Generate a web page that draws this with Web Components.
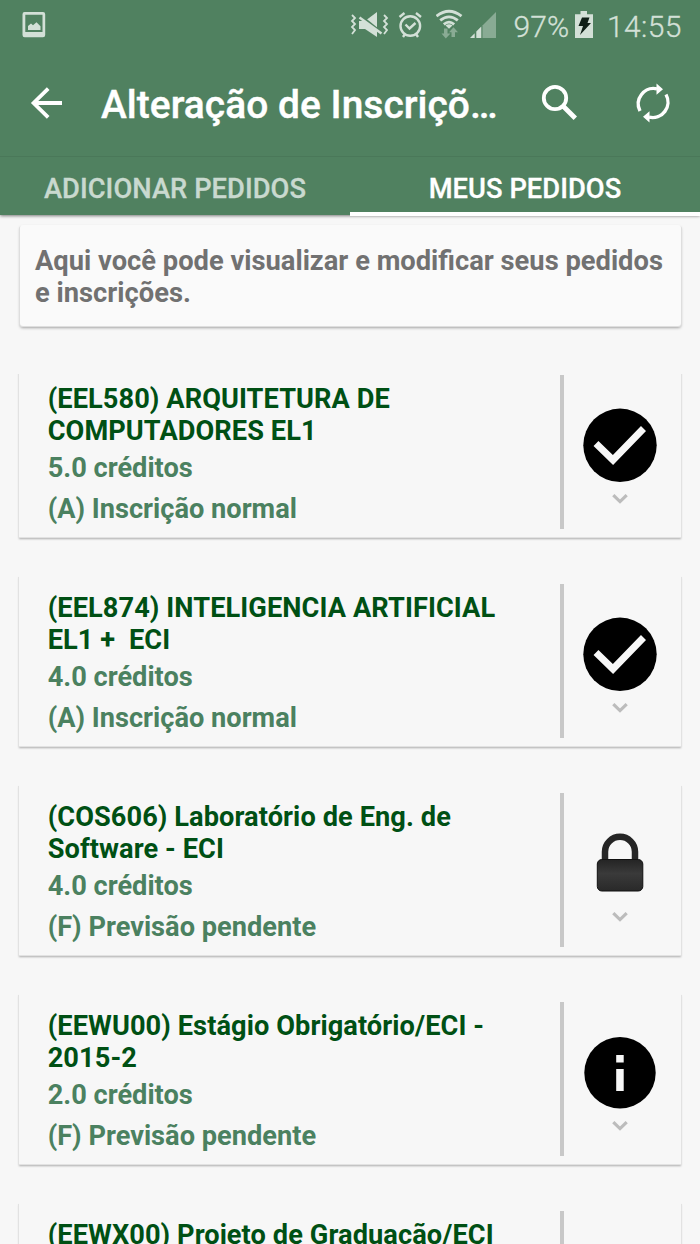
<!DOCTYPE html>
<html lang="pt-BR">
<head>
<meta charset="utf-8">
<title>Alteração de Inscrições</title>
<style>
html,body{margin:0;height:100%;overflow:hidden;background:#f7f7f7}
body{font-family:Roboto,"Liberation Sans",sans-serif}
</style>
</head>
<body>
<inscricoes-app></inscricoes-app>
<script>
const define = (name, html, init) => customElements.define(name, class extends HTMLElement {
  constructor(){
    super();
    const t = document.createElement('template');
    t.innerHTML = html;
    this.attachShadow({mode:'open'}).appendChild(t.content.cloneNode(true));
  }
  connectedCallback(){ if (init) init(this, this.shadowRoot); }
});

define('status-bar', `
<style>
:host{display:flex;align-items:center;height:50px;color:#d3e0d7;font-weight:300;font-size:30px;line-height:35px;white-space:pre}
svg{display:block;flex:none;fill:currentColor}
.photo{margin-left:22px;margin-right:303px}
.pct{width:60.500px;margin-left:2.500px;padding-top:2px;letter-spacing:.1px;-webkit-text-stroke:.3px currentColor}
.time{margin-left:13px;padding-top:2px;letter-spacing:.4px;-webkit-text-stroke:.3px currentColor}
</style>
<svg class="photo" width="24" height="50" viewBox="0 0 24 50"><path fill-rule="evenodd" d="M2.500 12H21q2.200 0 2.200 2.200V35q0 2.200-2.200 2.200H2.700Q.5 37.200.5 35V14.200Q.5 12 2.500 12ZM3.300 14.700V32H20.500V14.700Z"/><path d="M6 30V26l3-2.500 2 1.800 3.500-3 4 4V30Z"/></svg>
<svg width="41" height="50" viewBox="349 0 41 50"><path d="M359 21h6l12-9v25l-12-8h-6z"/><path d="M361 16l21 17" stroke="#508160" stroke-width="2.500"/><path d="M359.500 17.500l22 16" stroke="currentColor" stroke-width="2.500"/><path d="M352 15l3 3-3 3 3 3-3 3 3 3-3 4M384 15l3 3-3 3 3 3-3 3 3 3-3 4" fill="none" stroke="currentColor" stroke-width="1.800"/></svg>
<svg width="46" height="50" viewBox="390 0 46 50"><g fill="none" stroke="currentColor" stroke-width="2.400"><circle cx="410.300" cy="26" r="9.800"/><path d="M405.500 24.500l4 4 6-5.500M399.500 17l5-4M421 17l-5-4M405 34l-2 3M416 34l2 3"/></g></svg>
<svg width="32" height="50" viewBox="436 0 32 50"><g fill="none" stroke="currentColor" stroke-width="2.800"><path d="M436.500 16.200Q449 6.200 461.500 16.200M440.200 20.400Q449 13.300 457.800 20.400M443.800 24.300Q449 20 454.200 24.300"/></g><path d="M445.500 25.500Q449 23 452.500 25.500L449 28.700Z"/><g fill="#89ab94"><path d="M444 28.500h3.500v5h3l-4.700 5-4.300-5h2.500zM451.500 37v-4.800h-2.500l4.500-5 4.500 5h-3V37z"/></g></svg>
<svg width="43" height="50" viewBox="468 0 43 50"><path fill="#89ab94" d="M482.500 25.500L496 12v26h-13.500z"/><path d="M470 38l4.700-4.800V38zM476.300 31.600l5-5V38h-5z"/></svg>
<span class="pct">97%</span>
<svg width="20" height="50" viewBox="575 0 20 50"><path d="M576 14.200h5.500V11h6.500v3.200h6V38h-18z"/><path fill="#102018" d="M583 17.500h7.500l-2 5.500h3.500l-11 12 3-9h-4.500z"/></svg>
<span class="time">14:55</span>`);

define('app-toolbar', `
<style>
:host{display:flex;align-items:center;height:106px;color:#fff;border-bottom:1px solid #4a7859}
h1{margin:3px 0 0 37px;width:402px;font-size:38.900px;line-height:46px;font-weight:500;white-space:nowrap;letter-spacing:.05px;-webkit-text-stroke:.4px currentColor}
svg{display:block;flex:none}
.back{margin-left:30px}.find{margin-left:37px}.sync{margin-left:54px}
</style>
<svg class="back" width="34" height="106" viewBox="30 50 34 106"><path d="M62 103H34M48.200 88.700L33.600 103l14.600 14.300" fill="none" stroke="#fff" stroke-width="3.800"/></svg>
<h1><slot></slot></h1>
<svg class="find" width="38" height="106" viewBox="540 50 38 106"><circle cx="555" cy="98" r="11.200" fill="none" stroke="#fff" stroke-width="3.800"/><path d="M563 106l12.300 12.300" stroke="#fff" stroke-width="4.800"/></svg>
<svg class="sync" width="40" height="106" viewBox="632 50 40 106"><g fill="none" stroke="#fff" stroke-width="3.400"><path d="M640 111A15.500 15.500 0 0 1 657 88.800M666 94.500A15.500 15.500 0 0 1 649 117.200"/></g><path fill="#fff" d="M656.500 83.500l6.500 5.800-6.500 5.500zM649.500 111.200l-6.500 5.600 6.500 5.700z"/></svg>`);

define('tab-item', `
<style>
:host{flex:1;box-sizing:border-box;height:59px;padding-top:15.500px;border-bottom:4px solid transparent;text-align:center;font-size:27.300px;line-height:32px;font-weight:500;letter-spacing:.05px;color:#c9d9cf;white-space:nowrap;-webkit-text-stroke:.3px currentColor}
:host([active]){color:#fff;border-bottom-color:#fff}
</style><slot></slot>`);

define('app-header', `
<style>
:host{display:block;position:relative;z-index:1;height:215px;background:#508160;box-shadow:0 1px 3px rgba(0,0,0,.5)}
nav{display:flex}
</style>
<slot></slot><nav><slot name="tab"></slot></nav>`);

define('info-card', `
<style>
:host{display:block;box-sizing:border-box;margin:10px 19.500px 0;height:101px;padding:20px 0 0 15.500px;background:#fafafa;border-radius:3px;box-shadow:-1px 1px 0 #dedede,1px 1px 0 #dedede,0 2px 3px rgba(0,0,0,.34);color:#717171;font-size:27.300px;line-height:32px;font-weight:700}
</style><slot></slot>`);

const icons = {
  check:`<circle cx="37" cy="37.300" r="36.700"/><path d="M13 35.500L30 52 60.500 20.500" fill="none" stroke="#f7f7f7" stroke-width="7"/>`,
  lock:`<defs><linearGradient id="g" x1="0" x2="0" y1="0" y2="1"><stop stop-color="#242424"/><stop offset=".45" stop-color="#3a3a3a"/><stop offset="1" stop-color="#292929"/></linearGradient></defs><path d="M22 36V25.800a15 15 0 0 1 30 0V36" fill="none" stroke="#252525" stroke-width="6.500"/><rect x="14.300" y="33.500" width="45.500" height="31.500" rx="4.500" fill="url(#g)" stroke="#111"/>`,
  info:`<circle cx="37" cy="37.800" r="35.700"/><path fill="#f7f7f7" d="M33.200 20h7.500v7.500h-7.500zM33.200 34h7.500v22h-7.500z"/>`
};

define('pedido-card', `
<style>
:host{display:flex;box-sizing:border-box;margin:0 19px 39px;height:170px;padding-top:8px;box-shadow:-1px 1px 0 #e2e2e2,1px 1px 0 #e2e2e2,0 2px 2px rgba(0,0,0,.3);background:#f7f7f7;font-size:27.200px;line-height:32px;font-weight:700;color:#4b8160}
.text{width:541px;box-sizing:border-box;padding:8px 0 0 28.700px}
.name{white-space:pre;color:#005014;letter-spacing:.08px}
.credits{margin-top:5px}.status{margin-top:9px}
.side{display:flex;flex-direction:column;align-items:center;box-sizing:border-box;width:116px;height:154px;border-left:4px solid #c8c8c8;padding-top:33px}
.side svg{display:block;flex:none}
.chev{margin-top:10px}
</style>
<div class="text"><div class="name"><slot></slot></div><div class="credits"></div><div class="status"></div></div>
<div class="side"><svg class="icon" width="74" height="75" viewBox="0 0 74 75"></svg>
<svg class="chev" width="16" height="11" viewBox="0 0 16 11"><path d="M1.300 2.100L8 8.600l6.700-6.500" fill="none" stroke="#bcbcbc" stroke-width="3.200"/></svg></div>`,
(el, root) => {
  root.querySelector('.credits').textContent = el.getAttribute('credits');
  root.querySelector('.status').textContent = el.getAttribute('status');
  root.querySelector('.icon').innerHTML = icons[el.getAttribute('icon')] || '';
});

define('inscricoes-app', `
<style>
:host{display:block;height:100vh;overflow:hidden}
.clip{margin-top:48px;height:870px;overflow:hidden}
.clip pedido-card:first-child{margin-top:-7px}
</style>
<app-header>
  <status-bar></status-bar>
  <app-toolbar>Alteração de Inscriçõ…</app-toolbar>
  <tab-item slot="tab">ADICIONAR PEDIDOS</tab-item>
  <tab-item slot="tab" active>MEUS PEDIDOS</tab-item>
</app-header>
<info-card>Aqui você pode visualizar e modificar seus pedidos e inscrições.</info-card>
<div class="clip">
<pedido-card icon="check" credits="5.0 créditos" status="(A) Inscrição normal">(EEL580) ARQUITETURA DE
COMPUTADORES EL1</pedido-card>
<pedido-card icon="check" credits="4.0 créditos" status="(A) Inscrição normal">(EEL874) INTELIGENCIA ARTIFICIAL
EL1 +  ECI</pedido-card>
<pedido-card icon="lock" credits="4.0 créditos" status="(F) Previsão pendente">(COS606) Laboratório de Eng. de
Software - ECI</pedido-card>
<pedido-card icon="info" credits="2.0 créditos" status="(F) Previsão pendente">(EEWU00) Estágio Obrigatório/ECI -
2015-2</pedido-card>
<pedido-card>(EEWX00) Projeto de Graduação/ECI</pedido-card>
</div>`);
</script>
</body>
</html>
